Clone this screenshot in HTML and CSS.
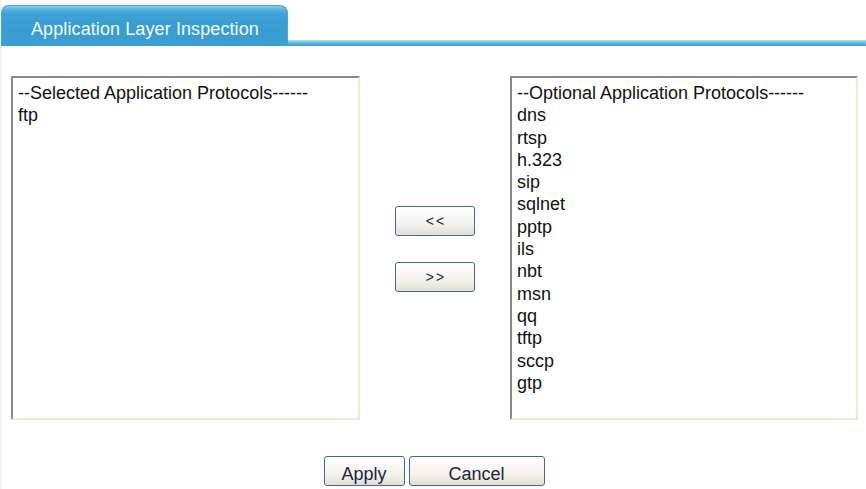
FILE: index.html
```html
<!DOCTYPE html>
<html lang="en">
<head>
  <meta charset="UTF-8" />
  <title>Application Layer Inspection</title>
  <link rel="stylesheet" href="styles.css">
</head>
<body>
  <div class="page">
    <div class="tabbar">
      <div class="tab">Application Layer Inspection</div>
      <div class="tabline"></div>
    </div>

    <div class="main">
      <div class="list list-left" id="selected">
        <div class="item">--Selected Application Protocols------</div>
        <div class="item">ftp</div>
      </div>

      <div class="mid">
        <button class="btn move">&lt;&lt;</button>
        <button class="btn move">&gt;&gt;</button>
      </div>

      <div class="list list-right" id="optional">
        <div class="item">--Optional Application Protocols------</div>
        <div class="item">dns</div>
        <div class="item">rtsp</div>
        <div class="item">h.323</div>
        <div class="item">sip</div>
        <div class="item">sqlnet</div>
        <div class="item">pptp</div>
        <div class="item">ils</div>
        <div class="item">nbt</div>
        <div class="item">msn</div>
        <div class="item">qq</div>
        <div class="item">tftp</div>
        <div class="item">sccp</div>
        <div class="item">gtp</div>
      </div>
    </div>

    <div class="actions">
      <button class="btn apply">Apply</button>
      <button class="btn cancel">Cancel</button>
    </div>
  </div>
</body>
</html>
```

FILE: styles.css
```css
body { margin: 0; background: #fff; font-family: "Liberation Sans", Arial, sans-serif; }
.page { height: 489px; border-left: 2px solid #f6f4ec; box-sizing: border-box; }

.tabbar { display: flex; align-items: flex-end; height: 46px; padding-top: 3px; box-sizing: border-box; margin-left: -1px; }
.tab { width: 287px; height: 41px; box-sizing: border-box; padding: 13px 0 0 29px; color: #f4fafd; font-size: 18px; letter-spacing: 0.1px; border: 1px solid #4aa6d6; border-bottom: none; border-radius: 8px 8px 0 0; background: linear-gradient(#8fd1ee 0, #5bb5e1 3px, #3ea3d6 8px, #369dd2 60%, #3f9fd2 100%); }
.tabline { flex: 1; height: 6px; background: linear-gradient(#b7e2f4, #7cc7ea 30%, #4dabdb 70%, #4aa6d6); }

.main { display: flex; padding: 30px 0 0 9px; }
.list { height: 344px; box-sizing: border-box; padding: 4px 5px; border: 2px solid; border-color: #8a8a8a #ece9d8 #ece9d8 #8a8a8a; font-size: 18px; line-height: 22.3px; color: #111; background: #fff; }
.list-left { width: 349px; }
.list-right { width: 348px; }
.mid { width: 150px; display: flex; flex-direction: column; align-items: center; padding-top: 130px; gap: 26px; }

.btn { font-family: "Liberation Sans", Arial, sans-serif; color: #1f2340; height: 30px; border: 1px solid #3e6a9a; border-radius: 3px; background: linear-gradient(#ffffff, #f4f3ee 60%, #e2dfd4); padding: 0; }
.move { width: 80px; font-size: 14px; letter-spacing: 2px; padding-left: 2px; }
.actions { display: flex; justify-content: center; gap: 4px; margin-top: 36px; }
.apply { width: 81px; font-size: 18px; padding-top: 7px; }
.cancel { width: 136px; font-size: 18px; padding-top: 7px; }
```
